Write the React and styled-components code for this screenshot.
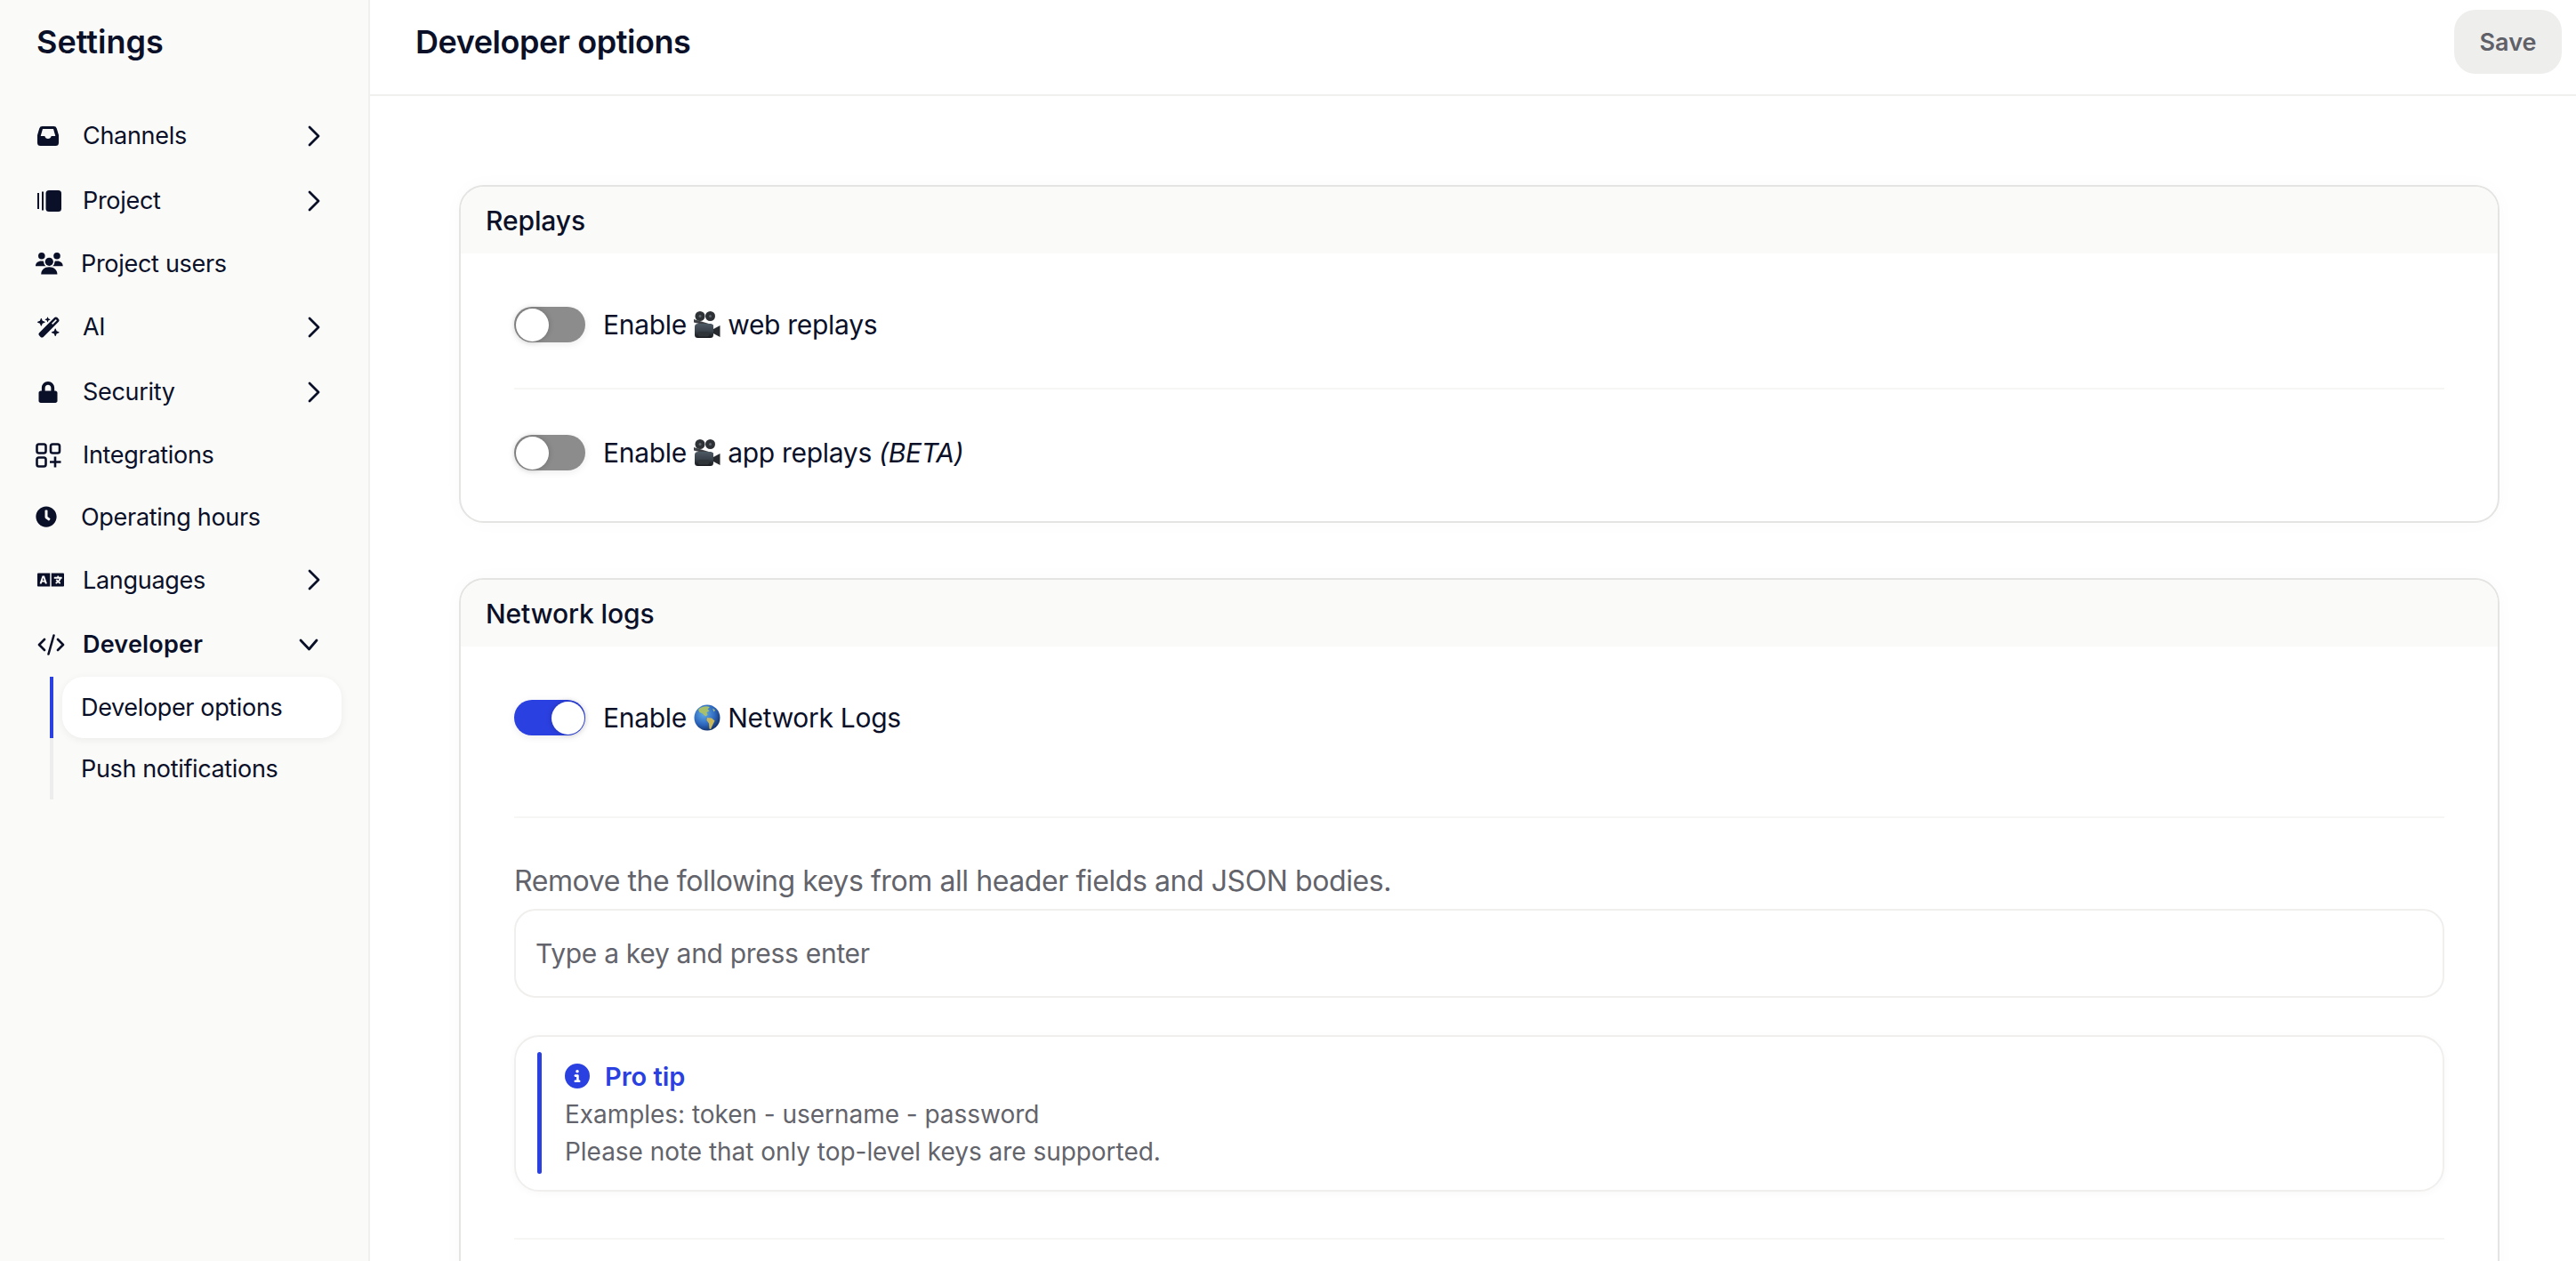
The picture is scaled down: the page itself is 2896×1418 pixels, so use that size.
import styled, { createGlobalStyle } from "styled-components";
import { FaClock, FaLanguage, FaLock } from "react-icons/fa";
import { FaCircleInfo, FaWandMagicSparkles } from "react-icons/fa6";

const INK = "#0b1029";
const BLUE = "#2b40e0";
const SIDE_BG = "#fafaf8";

const GlobalStyle = createGlobalStyle`
  html, body {
    margin: 0;
    padding: 0;
    background: #fff;
  }
  body {
    font-family: Inter, "Liberation Sans", sans-serif;
    color: ${INK};
    overflow: hidden;
  }
  * {
    box-sizing: border-box;
  }
`;

const InboxIcon = () => (
  <svg width="24" height="22" viewBox="0 0 24 22" fill="currentColor">
    <path
      fillRule="evenodd"
      d="M5.500 0h13a3.500 3.500 0 0 1 3.300 2.400L24 10v8.500a3.500 3.500 0 0 1-3.500 3.500h-17A3.500 3.500 0 0 1 0 18.500V10l2.200-7.600A3.500 3.500 0 0 1 5.500 0zM6 3l-2.300 8h4.600c.5 2 1.800 3 3.700 3s3.200-1 3.700-3h4.600L18 3z"
    />
  </svg>
);

const ProjectIcon = () => (
  <svg width="27" height="24" viewBox="0 0 27 24" fill="currentColor">
    <rect x="0" y="3" width="2" height="18" />
    <rect x="5" y="1.500" width="2" height="21" />
    <rect x="9.500" y="0" width="17.500" height="24" rx="3.500" />
  </svg>
);

const UsersIcon = () => (
  <svg width="31" height="25" viewBox="0 0 31 25" fill="currentColor">
    <circle cx="6.800" cy="3.800" r="3.800" />
    <circle cx="24" cy="3.800" r="3.800" />
    <path d="M0 15.200c0-3.400 2.600-5.700 6.500-5.700 3.600 0 6 1.800 6 5.700zM18 15.200c0-3.900 2.500-5.700 6.200-5.700 3.900 0 6.500 2.300 6.500 5.700z" />
    <circle cx="15.300" cy="10.300" r="6.200" fill={SIDE_BG} />
    <path d="M4.500 25c0-5.800 4.500-10 10.800-10s10.800 4.200 10.800 10z" fill={SIDE_BG} />
    <circle cx="15.300" cy="10.300" r="4.600" />
    <path d="M6.200 24.500c0-5 3.800-8.200 9.100-8.200s9.100 3.200 9.100 8.200c0 0-18.200 0-18.200 0z" />
  </svg>
);

const IntegrationsIcon = () => (
  <svg width="29" height="28" viewBox="0 0 29 28" fill="none" stroke="currentColor" strokeWidth="2.600">
    <rect x="1.500" y="1.500" width="10" height="10" rx="2.200" />
    <rect x="17" y="1.500" width="10" height="10" rx="2.200" />
    <rect x="1.500" y="16.500" width="10" height="10" rx="2.200" />
    <path d="M22 15.500v12M16 21.500h12.500" />
  </svg>
);

const CodeIcon = () => (
  <svg width="31" height="24" viewBox="0 0 31 24" fill="none" stroke="currentColor" strokeWidth="2.600" strokeLinecap="round" strokeLinejoin="round">
    <path d="M8 6l-6 6 6 6M23 6l6 6-6 6M18.500 1.500l-6 21" />
  </svg>
);

const ChevronRight = () => (
  <svg width="14" height="24" viewBox="0 0 14 24" fill="none" stroke="currentColor" strokeWidth="2.800" strokeLinecap="round" strokeLinejoin="round">
    <path d="M2 2l10 10-10 10" />
  </svg>
);

const ChevronDown = () => (
  <svg width="22" height="14" viewBox="0 0 22 14" fill="none" stroke="currentColor" strokeWidth="2.800" strokeLinecap="round" strokeLinejoin="round">
    <path d="M2 2l9.500 10L20 2" />
  </svg>
);

const CameraEmoji = ({ id }) => (
  <EmojiSvg viewBox="0 0 30 30" role="img" aria-label="movie camera">
    <defs>
      <linearGradient id={id} x1="0" y1="0" x2="0" y2="1">
        <stop offset="0" stopColor="#4d5964" />
        <stop offset="0.5" stopColor="#3a424b" />
        <stop offset="1" stopColor="#17191c" />
      </linearGradient>
    </defs>
    <circle cx="7" cy="5.500" r="5.500" fill="#2e3236" />
    <circle cx="18.500" cy="5.500" r="5.500" fill="#2e3236" />
    <circle cx="7" cy="5.500" r="1.500" fill="#5f666d" />
    <circle cx="18.500" cy="5.500" r="1.500" fill="#5f666d" />
    <path d="M0 9l22 6.500-1 2.500L0 12.500z" fill="#3d4146" />
    <rect x="1" y="14" width="21" height="16" rx="3.500" fill={`url(#${id})`} />
    <rect x="5" y="23" width="12" height="5.500" rx="1.500" fill="#30353a" />
    <path d="M22 20l7.500-4v13L22 25z" fill="#26292d" />
  </EmojiSvg>
);

const GlobeEmoji = () => (
  <EmojiSvg viewBox="0 0 30 30" role="img" aria-label="globe">
    <defs>
      <radialGradient id="globeSea" cx="0.38" cy="0.35" r="0.72">
        <stop offset="0" stopColor="#62ade8" />
        <stop offset="0.6" stopColor="#2c66bd" />
        <stop offset="1" stopColor="#102a5c" />
      </radialGradient>
    </defs>
    <circle cx="15" cy="15" r="14.500" fill="url(#globeSea)" />
    <path d="M5 6c3-3.500 9-4.500 13-3l-2.500 2.500 2 2-3 1.500 1 3-2.500 1.500-3-3-3.500-1.500z" fill="#a9c06a" />
    <path d="M15 15l5 .5 3.500 3-2 4-2.500 5.500-1.500-.5-.500-6-2.500-3.500z" fill="#cdb958" />
    <path d="M21 4.500l3 2-1.500 2z" fill="#a7bd7a" />
  </EmojiSvg>
);

const App = () => {
  return (
    <>
      <GlobalStyle />
      <Page>
        <Sidebar>
          <SidebarTitle>Settings</SidebarTitle>
          <Nav>
            <NavRow $arrow>
              <NavIcon $inset={2}><InboxIcon /></NavIcon>
              <NavLabel>Channels</NavLabel>
              <Arrow><ChevronRight /></Arrow>
            </NavRow>
            <NavRow $arrow>
              <NavIcon $inset={2}><ProjectIcon /></NavIcon>
              <NavLabel>Project</NavLabel>
              <Arrow><ChevronRight /></Arrow>
            </NavRow>
            <NavRow>
              <NavIcon $narrow><UsersIcon /></NavIcon>
              <NavLabel>Project users</NavLabel>
            </NavRow>
            <NavRow $arrow>
              <NavIcon $inset={2}><FaWandMagicSparkles size={26} /></NavIcon>
              <NavLabel>AI</NavLabel>
              <Arrow><ChevronRight /></Arrow>
            </NavRow>
            <NavRow $arrow>
              <NavIcon $inset={2}><FaLock size={24} /></NavIcon>
              <NavLabel>Security</NavLabel>
              <Arrow><ChevronRight /></Arrow>
            </NavRow>
            <NavRow>
              <NavIcon><IntegrationsIcon /></NavIcon>
              <NavLabel>Integrations</NavLabel>
            </NavRow>
            <NavRow>
              <NavIcon $narrow><FaClock size={24} /></NavIcon>
              <NavLabel>Operating hours</NavLabel>
            </NavRow>
            <NavRow $arrow>
              <NavIcon $inset={2}><FaLanguage size={30} /></NavIcon>
              <NavLabel>Languages</NavLabel>
              <Arrow><ChevronRight /></Arrow>
            </NavRow>
            <NavRow $arrow>
              <NavIcon $inset={2}><CodeIcon /></NavIcon>
              <NavLabel $bold>Developer</NavLabel>
              <Arrow $down><ChevronDown /></Arrow>
            </NavRow>
          </Nav>
          <SubNav>
            <SubItem $active>
              <SubPill $active>Developer options</SubPill>
            </SubItem>
            <SubItem>
              <SubPill>Push notifications</SubPill>
            </SubItem>
          </SubNav>
        </Sidebar>

        <Main>
          <TopBar>
            <PageTitle>Developer options</PageTitle>
            <SaveButton>Save</SaveButton>
          </TopBar>
          <Content>
            <Card>
              <CardHeader>Replays</CardHeader>
              <CardBody>
                <SettingRow>
                  <Toggle />
                  <ToggleLabel>Enable <CameraEmoji id="cameraWeb" /> web replays</ToggleLabel>
                </SettingRow>
                <SettingRow $divided>
                  <Toggle />
                  <ToggleLabel>Enable <CameraEmoji id="cameraApp" /> app replays <em>(BETA)</em></ToggleLabel>
                </SettingRow>
              </CardBody>
            </Card>

            <Card>
              <CardHeader>Network logs</CardHeader>
              <CardBody $open>
                <SettingRow $tall>
                  <Toggle $on />
                  <ToggleLabel>Enable <GlobeEmoji /> Network Logs</ToggleLabel>
                </SettingRow>
                <KeysSection>
                  <FieldLabel>Remove the following keys from all header fields and JSON bodies.</FieldLabel>
                  <KeyInput placeholder="Type a key and press enter" />
                  <TipBox>
                    <TipBar />
                    <TipText>
                      <TipTitle>
                        <FaCircleInfo size={28} />
                        Pro tip
                      </TipTitle>
                      <TipLine>Examples: token - username - password</TipLine>
                      <TipLine>Please note that only top-level keys are supported.</TipLine>
                    </TipText>
                  </TipBox>
                </KeysSection>
              </CardBody>
            </Card>
          </Content>
        </Main>
      </Page>
    </>
  );
};

const Page = styled.div`
  display: flex;
  width: 2896px;
  height: 1418px;
  overflow: hidden;
`;

const Sidebar = styled.aside`
  flex: 0 0 416px;
  background: ${SIDE_BG};
  border-right: 2px solid #f0f0ee;
  padding-top: 26px;
`;

const SidebarTitle = styled.h2`
  margin: 0 0 47.650px 41px;
  font-size: 36px;
  line-height: 43px;
  font-weight: 600;
`;

const Nav = styled.nav`
  display: flex;
  flex-direction: column;
`;

const NavRow = styled.div`
  display: flex;
  align-items: center;
  height: ${(p) => (p.$arrow ? "72.700px" : "69.500px")};
  padding: 0 54px 0 40px;
`;

const NavIcon = styled.span`
  flex: 0 0 ${(p) => (p.$narrow ? "51px" : "53px")};
  display: flex;
  align-items: center;
  padding-left: ${(p) => p.$inset || 0}px;
`;

const NavLabel = styled.span`
  font-size: 27px;
  letter-spacing: ${(p) => (p.$bold ? "0.200px" : "-0.300px")};
  font-weight: ${(p) => (p.$bold ? 600 : 400)};
  white-space: nowrap;
`;

const Arrow = styled.span`
  margin-left: auto;
  display: flex;
  margin-right: ${(p) => (p.$down ? "2px" : "0")};
`;

const SubNav = styled.div`
  display: flex;
  flex-direction: column;
  margin-left: 56px;
  margin-right: 30px;
`;

const SubItem = styled.div`
  height: 69px;
  padding-left: 10px;
  border-left: 4px solid ${(p) => (p.$active ? BLUE : "#ededed")};
`;

const SubPill = styled.div`
  display: flex;
  align-items: center;
  height: 69px;
  padding-left: 21px;
  font-size: 27px;
  letter-spacing: -0.350px;
  border-radius: 24px;
  white-space: nowrap;
  background: ${(p) => (p.$active ? "#fff" : "transparent")};
  box-shadow: ${(p) => (p.$active ? "0 2px 10px rgba(0, 0, 0, 0.06)" : "none")};
`;

const Main = styled.main`
  flex: 1;
  min-width: 0;
  display: flex;
  flex-direction: column;
`;

const TopBar = styled.header`
  flex: 0 0 108px;
  display: flex;
  justify-content: space-between;
  align-items: flex-start;
  padding: 11px 16px 0 51px;
  border-bottom: 2px solid #f0f0ee;
`;

const PageTitle = styled.h1`
  margin: 0;
  font-size: 36px;
  letter-spacing: -0.450px;
  line-height: 72px;
  font-weight: 600;
`;

const SaveButton = styled.button`
  width: 121px;
  height: 72px;
  border: none;
  border-radius: 24px;
  background: #eeeeed;
  color: #5f6068;
  font-family: inherit;
  font-size: 27px;
  font-weight: 600;
`;

const Content = styled.div`
  padding: 100px 86px 0 100px;
`;

const Card = styled.section`
  margin-bottom: 62px;
  background: #fff;
  border: 2px solid #e4e4e3;
  border-radius: 28px;
  box-shadow: 0 0 22px rgba(0, 0, 0, 0.025);
  overflow: hidden;
`;

const CardHeader = styled.div`
  height: 75px;
  display: flex;
  align-items: center;
  padding-left: 28px;
  background: ${SIDE_BG};
  font-size: 30px;
  letter-spacing: -0.100px;
  font-weight: 500;
`;

const CardBody = styled.div`
  padding: 9px 60px ${(p) => (p.$open ? "200px" : "6px")};
`;

const SettingRow = styled.div`
  display: flex;
  align-items: center;
  gap: 20px;
  padding: ${(p) => (p.$tall ? "51px 0 91px" : "51px 0")};
  border-top: ${(p) => (p.$divided ? "2px solid #f6f6f5" : "none")};
`;

const ToggleTrack = styled.span`
  flex: 0 0 80px;
  height: 40px;
  display: flex;
  align-items: center;
  justify-content: ${(p) => (p.$on ? "flex-end" : "flex-start")};
  padding: 0 1.500px;
  border-radius: 20px;
  background: ${(p) => (p.$on ? BLUE : "#8c8c8c")};
  box-shadow: 0 2px 8px rgba(0, 0, 0, 0.08);
`;

const ToggleKnob = styled.span`
  width: 37px;
  height: 37px;
  border-radius: 50%;
  background: #fff;
  box-shadow: 0 0 6px rgba(0, 0, 0, 0.22);
`;

const Toggle = ({ $on }) => (
  <ToggleTrack $on={$on}>
    <ToggleKnob />
  </ToggleTrack>
);

const ToggleLabel = styled.span`
  font-size: 30px;
  letter-spacing: -0.300px;
  line-height: 40px;
  white-space: nowrap;
`;

const EmojiSvg = styled.svg`
  display: inline-block;
  width: 30px;
  height: 30px;
  vertical-align: -4px;
`;

const KeysSection = styled.div`
  padding: 50px 0 52px;
  border-top: 2px solid #f6f6f5;
  border-bottom: 2px solid #f6f6f5;
`;

const FieldLabel = styled.div`
  margin-bottom: 10px;
  font-size: 32px;
  letter-spacing: -0.420px;
  line-height: 42px;
  color: #63646b;
`;

const KeyInput = styled.input`
  display: block;
  width: 100%;
  height: 100px;
  padding: 0 22px;
  border: 2px solid #f0efed;
  border-radius: 24px;
  font-family: inherit;
  font-size: 30px;
  letter-spacing: -0.300px;
  outline: none;

  &::placeholder {
    color: #63646b;
    opacity: 1;
  }
`;

const TipBox = styled.div`
  display: flex;
  gap: 26px;
  margin-top: 42px;
  padding: 17px 24px 18px;
  border: 2px solid #f0efed;
  border-radius: 28px;
  box-shadow: 0 2px 10px rgba(0, 0, 0, 0.03);
`;

const TipBar = styled.div`
  flex: 0 0 5px;
  border-radius: 3px;
  background: ${BLUE};
`;

const TipText = styled.div`
  padding: 5px 0 4px;
`;

const TipTitle = styled.div`
  display: flex;
  align-items: center;
  gap: 17px;
  height: 44px;
  color: ${BLUE};
  font-size: 29px;
  font-weight: 600;
`;

const TipLine = styled.div`
  font-size: 28px;
  letter-spacing: -0.040px;
  line-height: 42px;
  color: #63646b;
`;

export default App;
